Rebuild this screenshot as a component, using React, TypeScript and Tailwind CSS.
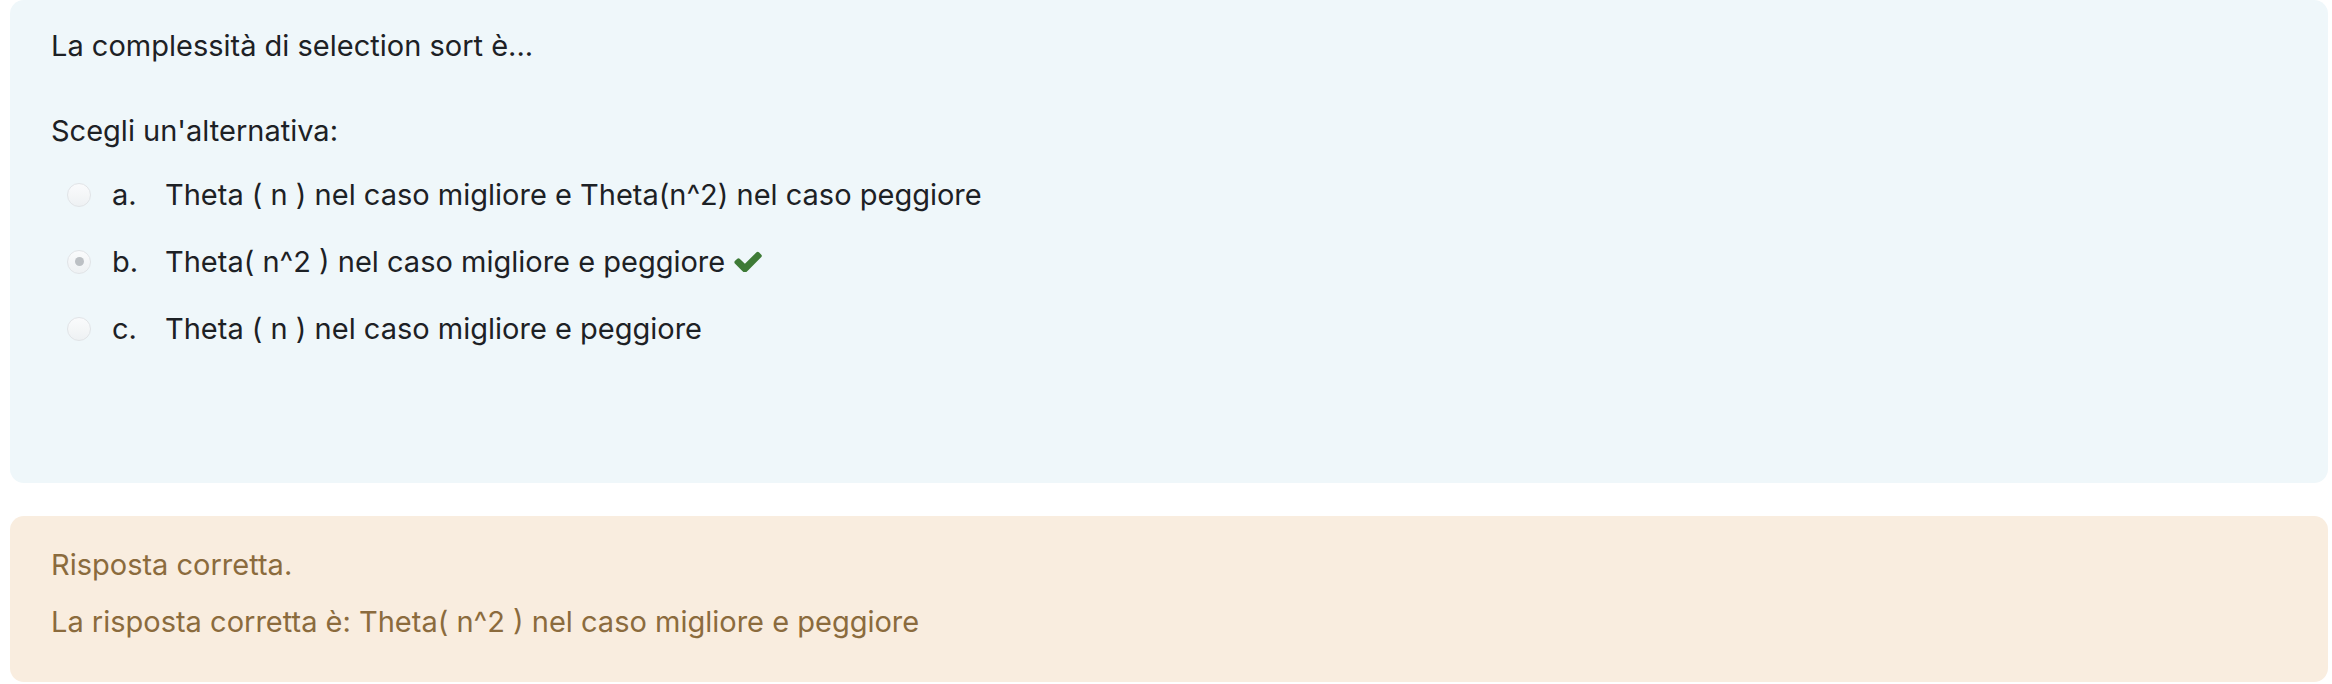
const options = [
  { letter: "a.", text: "Theta ( n ) nel caso migliore e Theta(n^2) nel caso peggiore", checked: false },
  { letter: "b.", text: "Theta( n^2 ) nel caso migliore e peggiore", checked: true },
  { letter: "c.", text: "Theta ( n ) nel caso migliore e peggiore", checked: false },
]

function Radio({ checked }: { checked: boolean }) {
  return (
    <span className="flex h-[24px] w-[24px] shrink-0 items-center justify-center rounded-full border border-[#e1e4e7] bg-gradient-to-b from-[#fafbfc] to-[#eef1f3]">
      {checked && <span className="h-[9px] w-[9px] rounded-full bg-[#bcc0c4]" />}
    </span>
  )
}

function CheckIcon() {
  // filled check mark, same shape as the font icon in the quiz review
  return (
    <svg viewBox="100 330 1580 1110" className="ml-[9px] h-[21px] w-[28px]" fill="#3e7b36">
      <path d="M1671 566q0 40-28 68l-724 724-136 136q-28 28-68 28t-68-28l-136-136-362-362q-28-28-28-68t28-68l136-136q28-28 68-28t68 28l294 295 656-657q28-28 68-28t68 28l136 136q28 28 28 68z" />
    </svg>
  )
}

export default function App() {
  return (
    <div className="min-h-[684px] bg-white pl-[10px] pr-[4px] font-['Inter',sans-serif] text-[29px] leading-[43px] text-[#1d2125]">
      <div className="h-[483px] rounded-[14px] bg-[#eff7fa] pl-[41px] pt-[24px]">
        <p>La complessità di selection sort è...</p>
        <p className="mt-[42px]">Scegli un'alternativa:</p>
        <div className="mt-[21px] flex flex-col gap-[24px]">
          {options.map((o) => (
            <div key={o.letter} className="flex items-center">
              <span className="ml-[16px] mr-[21px]">
                <Radio checked={o.checked} />
              </span>
              <span className="w-[53px]">{o.letter}</span>
              <span>{o.text}</span>
              {o.checked && <CheckIcon />}
            </div>
          ))}
        </div>
      </div>
      <div className="mt-[33px] h-[166px] rounded-[14px] bg-[#f9eddf] pl-[41px] pt-[27px] text-[#8b6b3d]">
        <p>Risposta corretta.</p>
        <p className="mt-[14px]">La risposta corretta è: Theta( n^2 ) nel caso migliore e peggiore</p>
      </div>
    </div>
  )
}
